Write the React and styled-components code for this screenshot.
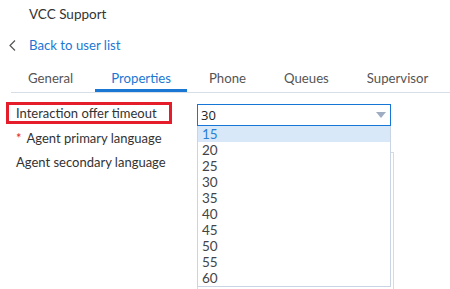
import React from 'react';
import styled, { createGlobalStyle } from 'styled-components';

const GlobalStyle = createGlobalStyle`
    html, body {
        margin: 0;
        padding: 0;
        background: #fff;
        overflow: hidden;
    }
    body {
        font-family: Lato, "Open Sans", sans-serif;
        font-size: 13px;
        color: #333;
    }
`;

const Page = styled.div`
    width: 450px;
    height: 289px;
    overflow: hidden;
`;

const Title = styled.div`
    height: 28px;
    line-height: 28px;
    padding-left: 29px;
    font-size: 13.5px;
    color: #333;
`;

const BackRow = styled.div`
    height: 34px;
    display: flex;
    align-items: center;
    padding-left: 9px;
    gap: 13px;
`;

const BackLink = styled.a`
    color: #1a78d4;
    font-size: 13.2px;
    cursor: pointer;
`;

const Tabs = styled.div`
    display: flex;
    gap: 6px;
    margin-left: 11px;
    padding-left: 1px;
    border-bottom: 1px solid #d7dee6;
`;

const Tab = styled.div`
    padding: 7px 16px 2px;
    line-height: 18px;
    font-size: 13.2px;
    color: ${p => (p.$active ? '#1a78d4' : '#555')};
    border-bottom: 3px solid ${p => (p.$active ? '#1a78d4' : 'transparent')};
`;

const Form = styled.div`
    padding-top: 9px;
    display: grid;
    grid-template-columns: 181px 194px;
    grid-auto-rows: 24px;
    padding-left: 16px;
`;

const Label = styled.div`
    display: flex;
    align-items: center;
    white-space: nowrap;
    color: #333;
`;

const Highlight = styled.div`
    display: flex;
    align-items: center;
    box-sizing: border-box;
    width: 166px;
    margin: -4px 0 -2px -10px;
    padding-left: 7px;
    border: 3px solid #e51d2a;
    white-space: nowrap;
    color: #333;
`;

const Required = styled.span`
    color: #e0242f;
    margin-right: 5px;
`;

const Field = styled.div`
    position: relative;
`;

const SelectBox = styled.div`
    box-sizing: border-box;
    height: 22px;
    margin-top: 2px;
    border: 1px solid #1676d8;
    display: flex;
    align-items: center;
    justify-content: space-between;
    padding: 0 4px 0 3px;
    font-family: "Open Sans", sans-serif;
    font-size: 13px;
    color: #222;
`;

const Options = styled.ul`
    position: absolute;
    top: 24px;
    left: 0;
    width: 194px;
    box-sizing: border-box;
    margin: 0;
    padding: 0;
    list-style: none;
    background: #fff;
    border: 1px solid #c9d5e4;
    border-top: none;
    z-index: 2;
`;

const Option = styled.li`
    height: 16px;
    line-height: 16px;
    padding-left: 4px;
    overflow: hidden;
    font-family: Lato, sans-serif;
    font-size: 13.5px;
    color: ${p => (p.$selected ? '#2b7fd4' : '#444')};
    background: ${p => (p.$selected ? '#d9e8f8' : 'transparent')};
`;

const ListBox = styled.div`
    box-sizing: border-box;
    width: 197px;
    height: 140px;
    margin-top: 2px;
    border: 1px solid #d3dbe5;
`;

const Chevron = () => (
    <svg width="7" height="11" viewBox="0 0 7 11">
        <polyline points="6,0.5 1,5.5 6,10.5" fill="none" stroke="#555" strokeWidth="1.2" />
    </svg>
);

const Arrow = () => (
    <svg width="10" height="6" viewBox="0 0 10 6">
        <polygon points="0,0 10,0 5,6" fill="#9fadc3" />
    </svg>
);

const tabs = ['General', 'Properties', 'Phone', 'Queues', 'Supervisor'];
const values = [15, 20, 25, 30, 35, 40, 45, 50, 55, 60];

const App = () => (
    <Page>
        <GlobalStyle />
        <Title>VCC Support</Title>
        <BackRow>
            <Chevron />
            <BackLink>Back to user list</BackLink>
        </BackRow>
        <Tabs>
            {tabs.map(t => (
                <Tab key={t} $active={t === 'Properties'}>{t}</Tab>
            ))}
        </Tabs>
        <Form>
            <Label>
                <Highlight>Interaction offer timeout</Highlight>
            </Label>
            <Field>
                <SelectBox>
                    <span>30</span>
                    <Arrow />
                </SelectBox>
                <Options>
                    {values.map(v => (
                        <Option key={v} $selected={v === 15}>{v}</Option>
                    ))}
                </Options>
            </Field>
            <Label><Required>*</Required>Agent primary language</Label>
            <Field />
            <Label>Agent secondary language</Label>
            <Field>
                <ListBox />
            </Field>
        </Form>
    </Page>
);

export default App;
